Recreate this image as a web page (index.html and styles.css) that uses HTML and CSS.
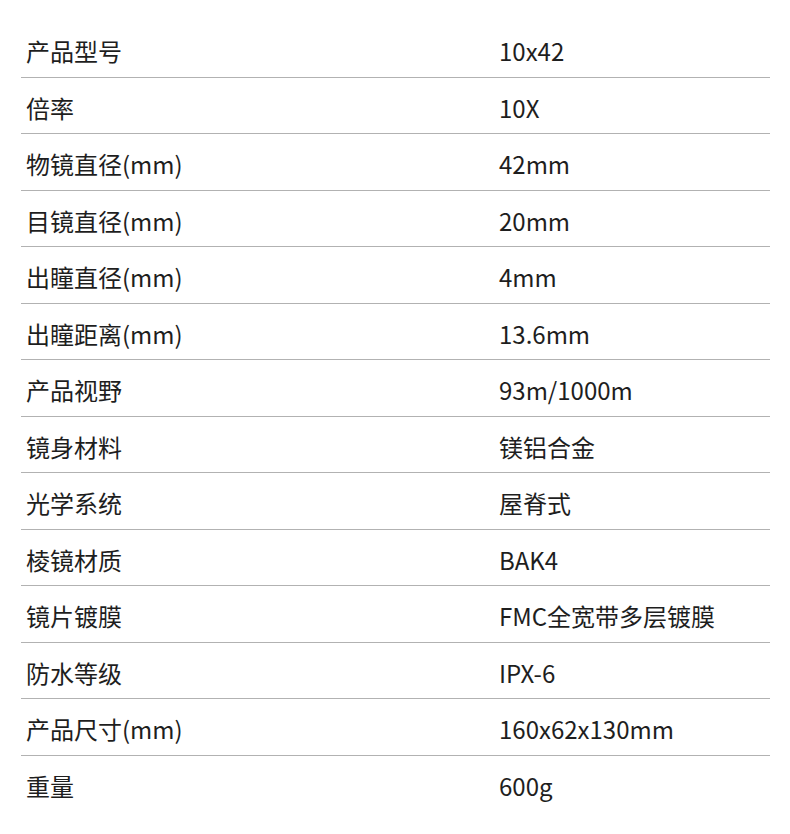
FILE: index.html
```html
<!DOCTYPE html>
<html lang="zh">
<head>
<meta charset="utf-8">
<link rel="stylesheet" href="styles.css">
</head>
<body>
<div class="spec">
  <div class="row"><div class="k">产品型号</div><div class="v">10x42</div></div>
  <div class="row"><div class="k">倍率</div><div class="v">10X</div></div>
  <div class="row"><div class="k">物镜直径(mm)</div><div class="v">42mm</div></div>
  <div class="row"><div class="k">目镜直径(mm)</div><div class="v">20mm</div></div>
  <div class="row"><div class="k">出瞳直径(mm)</div><div class="v">4mm</div></div>
  <div class="row"><div class="k">出瞳距离(mm)</div><div class="v">13.6mm</div></div>
  <div class="row"><div class="k">产品视野</div><div class="v">93m/1000m</div></div>
  <div class="row"><div class="k">镜身材料</div><div class="v">镁铝合金</div></div>
  <div class="row"><div class="k">光学系统</div><div class="v">屋脊式</div></div>
  <div class="row"><div class="k">棱镜材质</div><div class="v">BAK4</div></div>
  <div class="row"><div class="k">镜片镀膜</div><div class="v">FMC全宽带多层镀膜</div></div>
  <div class="row"><div class="k">防水等级</div><div class="v">IPX-6</div></div>
  <div class="row"><div class="k">产品尺寸(mm)</div><div class="v">160x62x130mm</div></div>
  <div class="row"><div class="k">重量</div><div class="v">600g</div></div>
</div>
</body>
</html>
```
FILE: styles.css
```css
html, body {
  margin: 0;
  padding: 0;
  background: #ffffff;
}
body {
  font-family: "Noto Sans CJK SC", "Noto Sans", sans-serif;
  color: #1e1e1e;
  font-size: 24px;
}
.spec {
  margin: 21px 20px 0 21px;
}
.row {
  display: grid;
  grid-template-columns: 478px 1fr;
  align-items: center;
  height: 56.5px;
  box-sizing: border-box;
  padding-top: 5px;
  border-bottom: 1px solid #b2b2b2;
}
.row:last-child {
  border-bottom: none;
}
.k {
  padding-left: 5px;
  line-height: 1;
}
.v {
  line-height: 1;
}
```
